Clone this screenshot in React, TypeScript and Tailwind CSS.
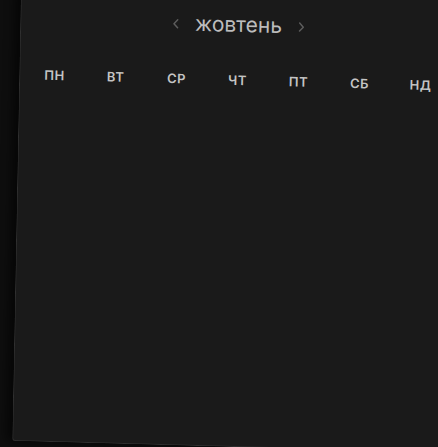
import React from "react";

const days = ["ПН", "ВТ", "СР", "ЧТ", "ПТ", "СБ", "НД"];

function Chevron({ dir }: { dir: "left" | "right" }) {
  return (
    <svg width="7" height="11" viewBox="0 0 7 11" fill="none">
      {dir === "left" ? (
        <path d="M5.5 1.5 L1.8 5.5 L5.5 9.5" stroke="#5c5c5c" strokeWidth="1.5" strokeLinecap="round" strokeLinejoin="round" />
      ) : (
        <path d="M1.5 1.5 L5.2 5.5 L1.5 9.5" stroke="#5c5c5c" strokeWidth="1.5" strokeLinecap="round" strokeLinejoin="round" />
      )}
    </svg>
  );
}

export default function App() {
  return (
    <div
      className="w-[438px] h-[447px] overflow-hidden bg-[#0e0e0e]"
      style={{ fontFamily: "Inter, 'Noto Sans', sans-serif" }}
    >
      <div className="ml-[21px] -mt-[20px] w-[500px] h-[461px] pt-[20px] origin-top-left [transform:skewX(-1.1deg)_skewY(1.55deg)] bg-[#1a1a1a] border-l border-b border-[#2f2f2f] rounded-bl-[3px] shadow-[-6px_0_10px_rgba(0,0,0,0.55)] px-[4px]">
        <div className="h-[38px] w-[427px] flex items-center justify-center gap-[16px]">
          <Chevron dir="left" />
          <span className="text-[21px] leading-none text-[#bdbdbd] -mt-[1px]">жовтень</span>
          <Chevron dir="right" />
        </div>
        <div className="mt-[28px] w-[427px] grid grid-cols-7">
          {days.map((d) => (
            <div
              key={d}
              className="h-[16px] flex items-center justify-center text-[13px] leading-[16px] font-semibold tracking-[0.04em] text-[#c4c4c4]"
            >
              {d}
            </div>
          ))}
        </div>
      </div>
    </div>
  );
}
